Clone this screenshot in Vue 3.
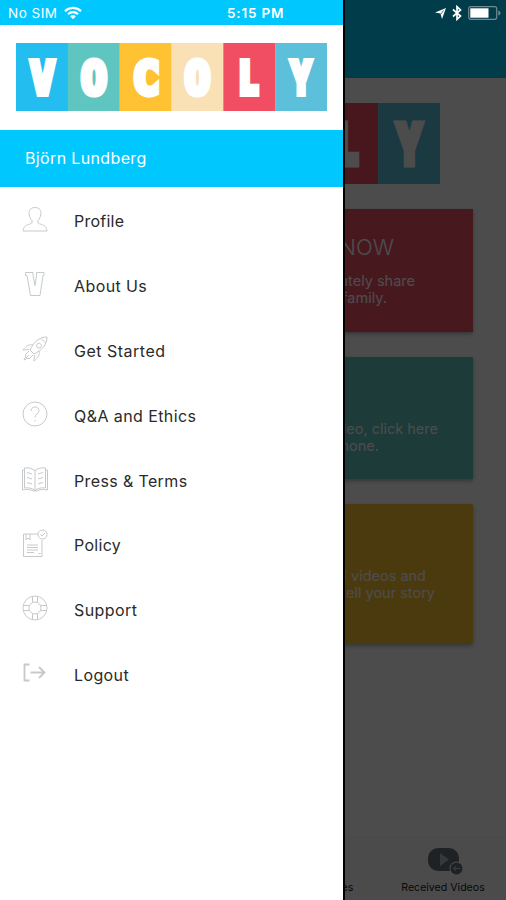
<template>
  <div class="phone">
    <div class="screen">
      <div class="topbar"></div>
      <svg class="home-logo" viewBox="208 0 104 68" preserveAspectRatio="none">
        <g v-for="t in tiles.slice(4)" :key="t.left">
          <rect :x="t.left" y="0" width="52.2" height="68" :fill="t.color" />
          <text :x="t.x" y="51.3" :textLength="t.w" lengthAdjust="spacingAndGlyphs">{{ t.letter }}</text>
        </g>
      </svg>
      <div class="cards">
        <div v-for="card in cards" :key="card.name" class="card" :class="card.name">
          <h2 v-if="card.title">{{ card.title }}</h2>
          <p v-for="line in card.lines" :key="line.text" :style="{ marginRight: line.right + 'px' }">{{ line.text }}</p>
        </div>
      </div>
      <div class="tabs">
        <div class="tab sent">es</div>
        <div class="tab received">
          <svg width="38" height="30" viewBox="0 0 38 30">
            <rect x="2" y="2" width="31" height="23" rx="10" fill="#68727a" />
            <path d="M14 7v13l9-6.5z" fill="#b5babd" />
            <circle cx="30.500" cy="22.500" r="7" fill="#f7f7f7" />
            <circle cx="30.500" cy="22.500" r="6" fill="#68727a" />
            <path d="M34.500 22.500h-7m2.500-2.500-2.500 2.500 2.500 2.500" fill="none" stroke="#ccc" />
          </svg>
          <span>Received Videos</span>
        </div>
      </div>
    </div>

    <div class="dim"></div>

    <div class="drawer">
      <div class="drawer-status"></div>
      <div class="brand">
        <svg class="logo" viewBox="0 0 312 68" preserveAspectRatio="none">
          <g v-for="t in tiles" :key="t.left">
            <rect :x="t.left" y="0" width="52.2" height="68" :fill="t.color" />
            <text :class="{ round: t.round }" :x="t.x" y="51.3" :textLength="t.w" lengthAdjust="spacingAndGlyphs">{{ t.letter }}</text>
          </g>
        </svg>
      </div>
      <div class="user">Björn Lundberg</div>
      <ul class="menu">
        <li v-for="item in menu" :key="item.label">
          <svg class="icon" :class="{ bold: item.bold }" viewBox="0 0 28 28">
            <path v-for="d in item.paths" :key="d" :d="d" />
          </svg>
          <span :style="{ letterSpacing: item.spacing + 'px' }">{{ item.label }}</span>
        </li>
      </ul>
    </div>

    <div class="status">
      <span class="carrier">No SIM</span>
      <svg class="wifi" width="18" height="14" viewBox="0 0 18 14">
        <path d="M1 5.200a11.400 11.400 0 0 1 16 0M4 8.300a7 7 0 0 1 10 0" fill="none" stroke="#fff" stroke-width="2.200" />
        <path d="M6.200 10.300a4 4 0 0 1 5.600 0L9 13.200z" fill="#fff" />
      </svg>
      <span class="time">5:15 PM</span>
      <svg class="arrow" width="13" height="13" viewBox="0 0 13 13">
        <path d="M12 1 8 12 6.500 6.500 1 5.600z" fill="#fff" />
        <path d="M9.500 3.500 7 7" stroke="#003c4c" stroke-width=".7" />
      </svg>
      <svg class="bt" width="10" height="16" viewBox="0 0 10 16">
        <path d="M1 4.500 8.500 11 5 14.300V1.700L8.500 5 1 11.500" fill="none" stroke="#fff" stroke-width="1.700" />
      </svg>
      <svg class="battery" width="33" height="14" viewBox="0 0 33 14">
        <rect x=".7" y=".7" width="28" height="12.600" rx="2" fill="none" stroke="#708c93" stroke-width="1.200" />
        <rect x="2.300" y="2.300" width="18.200" height="9.400" fill="#fff" />
        <path d="M30.300 4.500q2.200.5 2.200 2.500t-2.200 2.500z" fill="#708c93" />
      </svg>
    </div>
  </div>
</template>

<script setup>
const tiles = [
  { letter: 'V', color: '#24bdf0', left: 0, x: 14, w: 25 },
  { letter: 'O', color: '#5ec5c0', left: 52, x: 65.5, w: 25.5, round: true },
  { letter: 'C', color: '#fec233', left: 104, x: 117.5, w: 26.5, round: true },
  { letter: 'O', color: '#f9e0b5', left: 156, x: 169.2, w: 25.5, round: true },
  { letter: 'L', color: '#f14e63', left: 208, x: 225, w: 18 },
  { letter: 'Y', color: '#5dc0da', left: 260, x: 275, w: 22 }
]

const cards = [
  {
    name: 'record',
    title: 'RECORD NOW',
    lines: [
      { text: 'immediately share', right: 58 },
      { text: 'family.', right: 86 }
    ]
  },
  {
    name: 'upload',
    lines: [
      { text: 'video, click here', right: 35 },
      { text: 'phone.', right: 94 }
    ]
  },
  {
    name: 'story',
    lines: [
      { text: 'recorded videos and', right: 47 },
      { text: 'tell your story', right: 38 }
    ]
  }
]

const menu = [
  {
    label: 'Profile',
    spacing: 0.25,
    paths: ['M14 2.500c-4.500 0-6.300 3-5.900 6.500.3 3.500 1.900 5.200 2.900 6.500.8 2.500-.5 3-3.500 4-3 1-4.800 2-5.500 6.500h24c-.7-4.500-2.500-5.500-5.500-6.500s-4.300-1.500-3.500-4c1-1.300 2.600-3 2.900-6.500.4-3.500-1.400-6.500-5.900-6.500z']
  },
  {
    label: 'About Us',
    spacing: 0.4,
    paths: ['M4.500 2.500h7.500v3l2 10 1.500-10v-3h7.500v3h-1L19 25.500H9.500L6 5.500H4.500z']
  },
  {
    label: 'Get Started',
    spacing: 0.5,
    paths: [
      'M26 2c-8 0-13 5-17 13l4 4c8-4 13-9 13-17zM20 3.500l4.500 4.500',
      'M12 10c-4-1-7 1-10 5l6-.5M18 16c1 4-1 7-5 10l.5-6',
      'M17 8.500a2.400 2.400 0 1 0 3 3.500 2.400 2.400 0 0 0-3-3.500M8 16l-4 4 1 1-2 4 4-2 1 1 4-4M8 20l-3 3'
    ]
  },
  {
    label: 'Q&A and Ethics',
    spacing: 0.42,
    paths: ['M14 2a12 12 0 1 0 0 24 12 12 0 1 0 0-24', 'M10 11c0-5 8-5.500 8-.5 0 3.500-4 3.500-4 7M14 20v1.500']
  },
  {
    label: 'Press & Terms',
    spacing: 0.37,
    paths: [
      'M14 5.500C10.500 3 7 2.500 3.500 3v20c4-.5 7.500 0 10.500 2.500M14 5.500C17.500 3 21 2.500 24.500 3v20c-4-.5-7.500 0-10.500 2.500M14 5.500v20M3.500 5H1.500v20c4-1 8-.5 11 1h3c3-1.500 7-2 11-1V5h-2',
      'M6 7.500l5 1.500M6 12.500l5 1.500M6 17.500l5 1.500M22 7.500L17 9M22 12.500l-5 1.500M22 17.500l-5 1.500'
    ]
  },
  {
    label: 'Policy',
    spacing: 0.3,
    paths: [
      'M17 5H2.500v22.500h18.500V11M5 5v6l2-2 2 2V5M6 16h11M6 18.500h11M6 21h11M6 23.500h7M17.500 24.500h2',
      'M21.500 1a4.500 4.500 0 1 0 0 9 4.500 4.500 0 1 0 0-9M19.500 5.500l1.500 1.500 3-3'
    ]
  },
  {
    label: 'Support',
    spacing: 0.42,
    paths: [
      'M14 2a12 12 0 1 0 0 24 12 12 0 1 0 0-24M14 8a6 6 0 1 0 0 12 6 6 0 1 0 0-12',
      'M11.500 2.500v6M16.500 2.500v6M11.500 19.500v6M16.500 19.500v6M2.500 11.500h6M2.500 16.500h6M19.500 11.500h6M19.500 16.500h6'
    ]
  },
  {
    label: 'Logout',
    spacing: 0.38,
    bold: true,
    paths: ['M8.500 5.500H3.500v16h5', 'M9.500 13.500h14M18 8l5.500 5.500L18 19']
  }
]
</script>

<style>
body {
  background: #fff;
}
</style>

<style scoped>
.phone {
  position: relative;
  width: 506px;
  height: 900px;
  overflow: hidden;
  font-family: Inter, "Liberation Sans", sans-serif;
}
.screen {
  display: flex;
  flex-direction: column;
  height: 900px;
  background: #fff;
}
.topbar {
  height: 78px;
  background: #00c8f8;
}
.logo,
.home-logo {
  display: block;
}
.logo text,
.home-logo text {
  font-family: Inter, sans-serif;
  font-size: 46px;
  font-weight: 900;
  fill: #fff;
  stroke: #fff;
  stroke-width: 6px;
}
.logo .round {
  font-family: "DejaVu Sans Mono", monospace;
  font-size: 45px;
  font-weight: 700;
}
.home-logo {
  width: 124.3px;
  height: 81px;
  margin: 25px 66px 0 auto;
}
.cards {
  display: flex;
  flex-direction: column;
  gap: 25px;
  margin: 25px 33px 0;
}
.card {
  box-sizing: border-box;
  color: #fff;
  text-align: right;
  box-shadow: 0 2px 4px rgba(0, 0, 0, 0.3);
}
.card h2 {
  margin: 0 79px 12px 0;
  font-size: 22px;
  line-height: 26px;
  font-weight: 300;
}
.card p {
  margin: 0;
  font-size: 14.5px;
  line-height: 17.4px;
  white-space: nowrap;
}
.record {
  height: 123px;
  padding-top: 25px;
  background: #f2506a;
}
.upload {
  height: 122px;
  padding-top: 63px;
  background: #5ec5c0;
}
.story {
  height: 140px;
  padding-top: 63px;
  background: #ffc233;
  border-radius: 2px;
}
.tabs {
  display: flex;
  justify-content: flex-end;
  height: 62px;
  margin-top: auto;
  background: #fbfbfb;
  border-top: 1px solid #f3f3f3;
  font-size: 10.6px;
  color: #222;
}
.tab {
  display: flex;
  flex-direction: column;
  align-items: center;
  width: 126px;
}
.sent {
  box-sizing: border-box;
  width: 38px;
  padding: 43px 27px 0 0;
}
.received svg {
  margin: 8px 0 5px 4px;
}
.dim {
  position: absolute;
  inset: 0;
  background: rgba(0, 0, 0, 0.7);
}
.drawer {
  position: absolute;
  top: 0;
  left: 0;
  width: 343px;
  height: 900px;
  background: #fff;
  border-right: 2px solid #000;
}
.drawer-status {
  height: 25px;
  background: #00c8ff;
}
.brand {
  box-sizing: border-box;
  height: 105px;
  padding: 18px 0 0 16px;
}
.logo {
  width: 311px;
  height: 68px;
}
.user {
  height: 57px;
  padding-left: 25px;
  background: #00c8ff;
  color: #fff;
  font-size: 16px;
  letter-spacing: 0.36px;
  line-height: 56px;
}
.menu {
  margin: 2px 0 0;
  padding: 0;
  list-style: none;
}
.menu li {
  display: flex;
  align-items: center;
  height: 64.8px;
  padding-left: 21px;
  color: #2a2a2a;
  font-size: 16px;
}
.menu span {
  margin-left: 25px;
}
.icon {
  width: 28px;
  height: 28px;
  margin-top: -4px;
  fill: none;
  stroke: #c6c9cb;
  stroke-width: 1;
}
.icon.bold {
  stroke-width: 1.8;
}
.status {
  position: absolute;
  top: 0;
  left: 0;
  display: flex;
  align-items: center;
  width: 506px;
  height: 26px;
  color: #fff;
  font-size: 13.5px;
}
.carrier {
  width: 49px;
  margin-left: 8px;
  letter-spacing: 0.5px;
  white-space: nowrap;
}
.wifi {
  margin-left: 7px;
}
.time {
  width: 58px;
  margin-left: 145px;
  font-weight: 600;
  letter-spacing: 0.8px;
  white-space: nowrap;
}
.arrow {
  margin-left: 149px;
}
.bt {
  margin-left: 5px;
}
.battery {
  margin-left: 6px;
}
</style>
